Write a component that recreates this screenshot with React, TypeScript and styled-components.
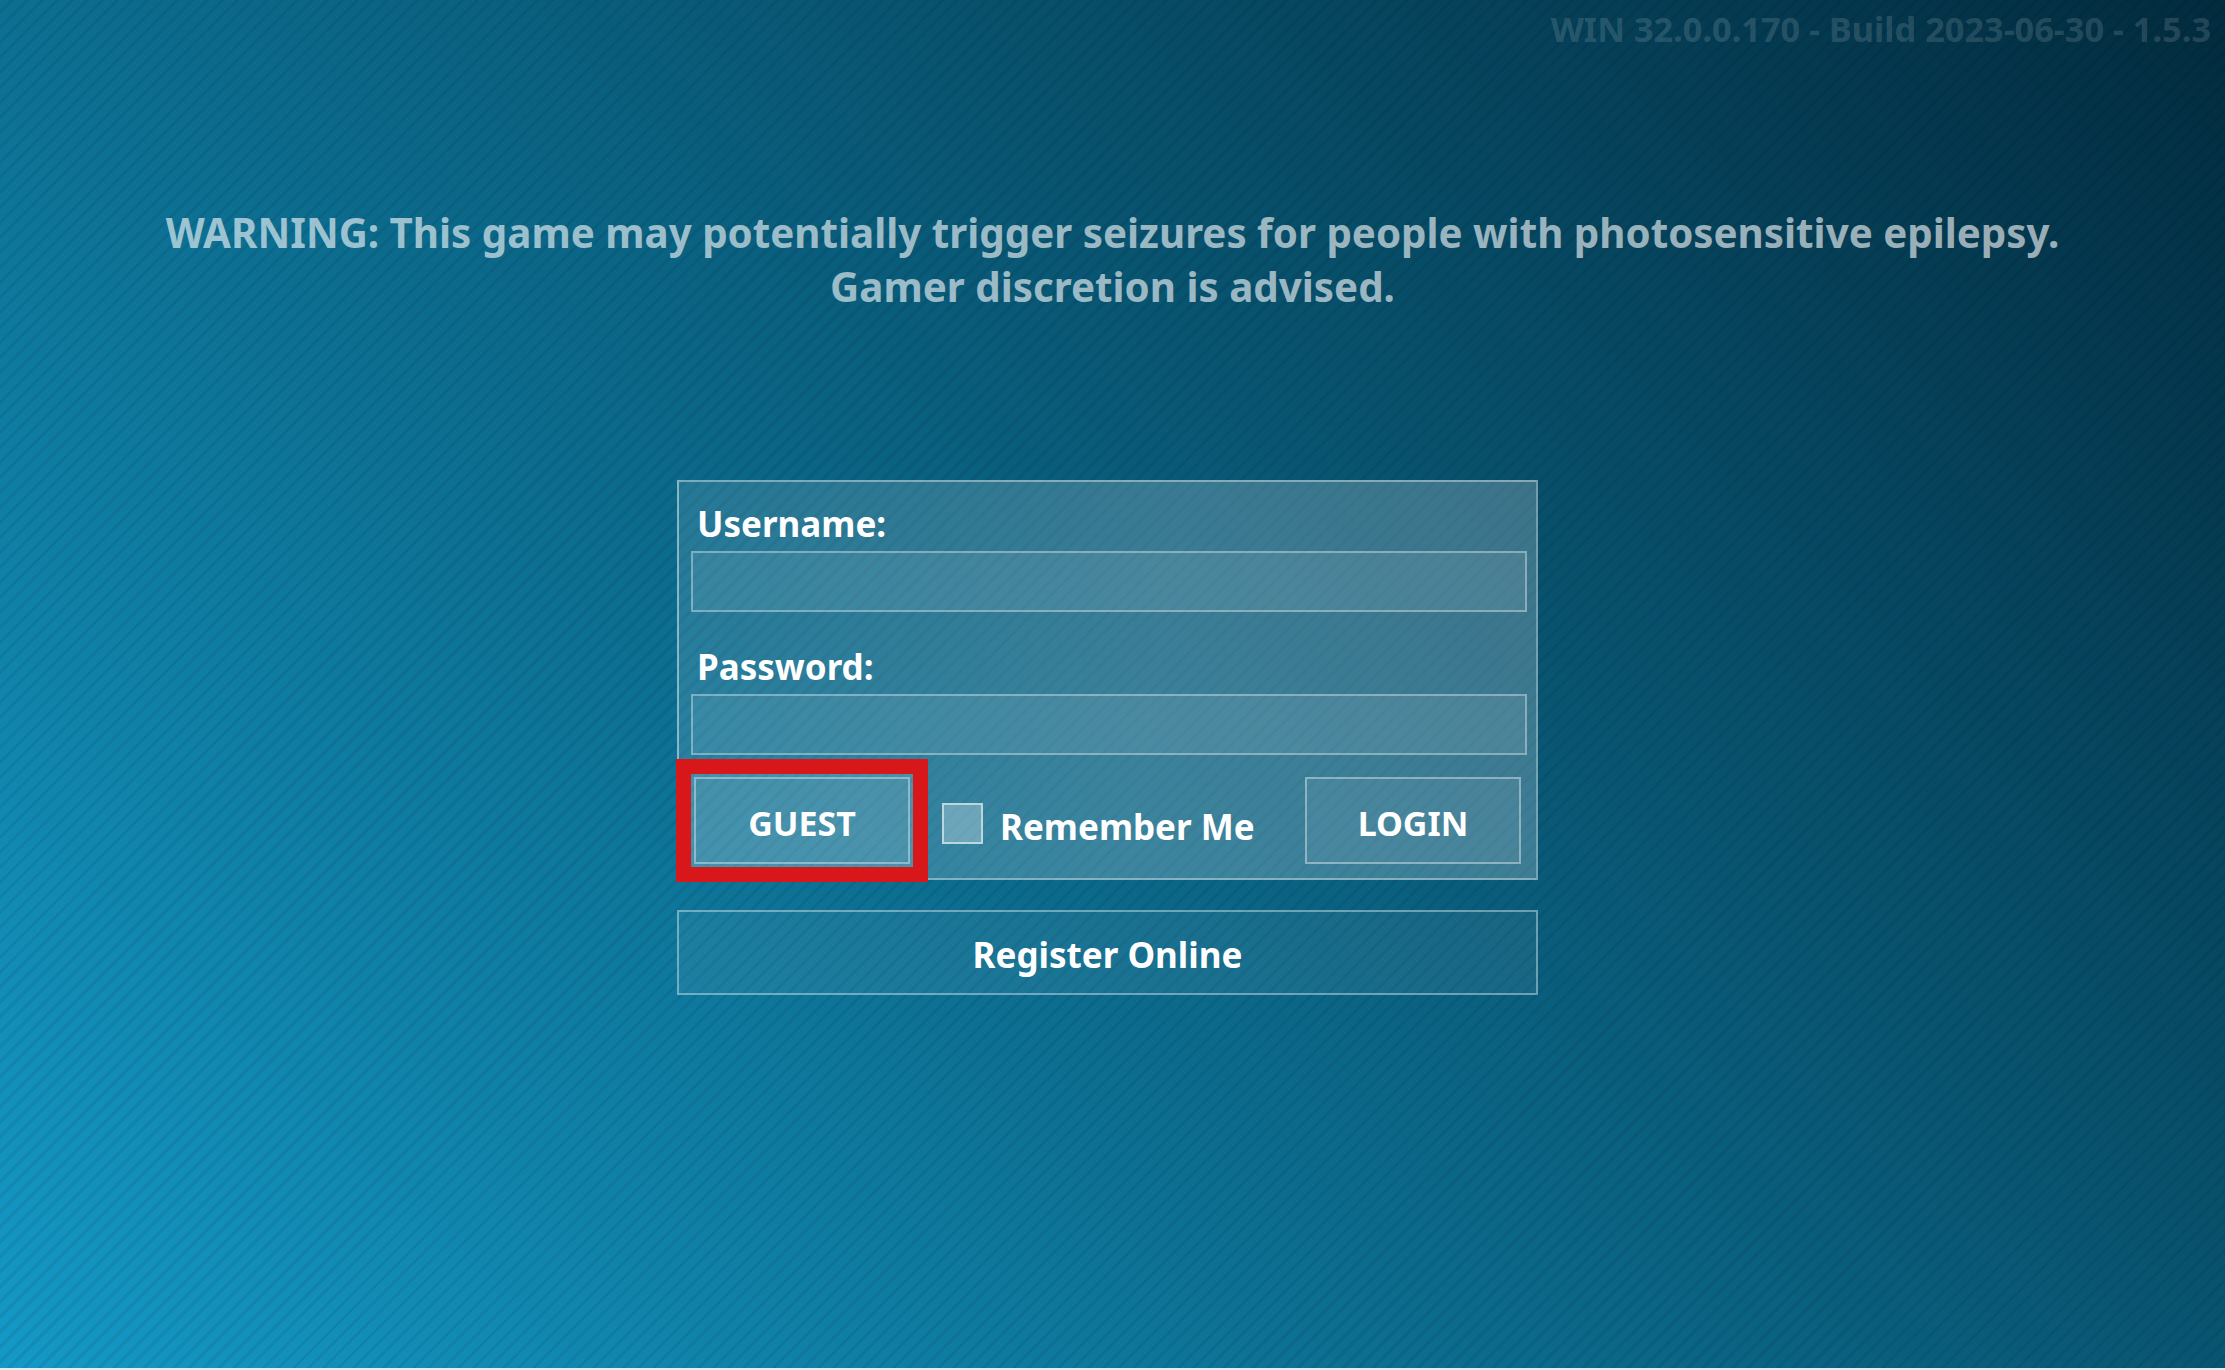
import { FC } from 'react';
import styled, { createGlobalStyle } from 'styled-components';

const GlobalStyle = createGlobalStyle`
    html, body {
        margin: 0;
        padding: 0;
        background: #e4edf1;
    }
    body {
        font-family: "Noto Sans", "Open Sans", "Liberation Sans", sans-serif;
    }
    * {
        box-sizing: border-box;
    }
`;

const Screen = styled.div`
    width: 100%;
    height: 1368px;
    display: flex;
    flex-direction: column;
    align-items: center;
    overflow: hidden;
    background-color: #0a6282;
    background-image: repeating-linear-gradient(
            135deg,
            rgba(0, 0, 0, 0) 0px,
            rgba(0, 0, 0, 0) 7.5px,
            rgba(0, 0, 0, 0.07) 7.5px,
            rgba(0, 0, 0, 0.07) 10.6px
        ),
        linear-gradient(45deg, #1499c6 0%, #0a6282 50%, #022b3e 100%);
`;

const VersionBar = styled.div`
    align-self: stretch;
    text-align: right;
    padding: 6px 14px 0 0;
    font-size: 34.3px;
    font-weight: 700;
    line-height: 46px;
    color: rgba(255, 255, 255, 0.15);
`;

const Warning = styled.p`
    margin: 154px 0 0;
    text-align: center;
    font-size: 40.3px;
    font-weight: 700;
    line-height: 54px;
    color: rgba(255, 255, 255, 0.6);
`;

const LoginForm = styled.div`
    width: 861px;
    margin: 166px 10px 0 0;
    display: flex;
    flex-direction: column;
`;

const Panel = styled.div`
    border: 2px solid rgba(255, 255, 255, 0.38);
    padding: 18px 9px 11px 12px;
    background: linear-gradient(
        100deg,
        rgba(255, 255, 255, 0.1) 0%,
        rgba(255, 255, 255, 0.2) 55%,
        rgba(255, 255, 255, 0.21) 100%
    );
`;

const FieldLabel = styled.label`
    display: block;
    padding-left: 6px;
    margin-bottom: 3px;
    font-size: 35px;
    font-weight: 700;
    line-height: 48px;
    color: #ffffff;
`;

const TextField = styled.input<{ spaced?: boolean }>`
    display: block;
    width: 100%;
    height: 61px;
    margin: 0 0 ${(p) => (p.spaced ? '31px' : '0')};
    border: 2px solid rgba(255, 255, 255, 0.35);
    background: rgba(255, 255, 255, 0.08);
    outline: none;
    color: #ffffff;
    font-size: 30px;
    font-family: inherit;
`;

const ButtonRow = styled.div`
    display: flex;
    align-items: flex-start;
    margin-top: 19px;
`;

// the red frame is a highlight drawn over the focused guest button
const GuestFocus = styled.div`
    padding: 3px;
    background: rgba(255, 255, 255, 0.12);
    outline: 15px solid #d8171b;
`;

const FormButton = styled.button<{ tint?: number }>`
    width: 216px;
    height: 87px;
    padding: 4px 0 0;
    border: 2px solid rgba(255, 255, 255, 0.38);
    background: rgba(255, 255, 255, ${(p) => p.tint ?? 0});
    color: #ffffff;
    font-family: inherit;
    font-size: 34px;
    font-weight: 700;
    cursor: pointer;
`;

const LoginButton = styled(FormButton)`
    margin: 3px 6px 0 auto;
`;

const Remember = styled.label`
    display: flex;
    align-items: flex-start;
    margin: 29px 0 0 29px;
    cursor: pointer;
`;

const CheckBox = styled.span`
    width: 41px;
    height: 41px;
    border: 2px solid rgba(255, 255, 255, 0.55);
    background: rgba(255, 255, 255, 0.28);
`;

const RememberText = styled.span`
    margin-left: 17px;
    font-size: 35px;
    font-weight: 700;
    line-height: 48px;
    color: #ffffff;
`;

const RegisterButton = styled.button`
    margin-top: 30px;
    height: 85px;
    padding: 3px 0 0;
    border: 2px solid rgba(255, 255, 255, 0.38);
    background: rgba(255, 255, 255, 0.06);
    color: #ffffff;
    font-family: inherit;
    font-size: 35px;
    font-weight: 700;
    cursor: pointer;
`;

const LoginScreen: FC = () => (
    <Screen>
        <VersionBar>WIN 32.0.0.170 - Build 2023-06-30 - 1.5.3</VersionBar>
        <Warning>
            WARNING: This game may potentially trigger seizures for people with photosensitive epilepsy.
            <br />
            Gamer discretion is advised.
        </Warning>
        <LoginForm>
            <Panel>
                <FieldLabel htmlFor="username">Username:</FieldLabel>
                <TextField id="username" type="text" spaced />
                <FieldLabel htmlFor="password">Password:</FieldLabel>
                <TextField id="password" type="password" />
                <ButtonRow>
                    <GuestFocus>
                        <FormButton>GUEST</FormButton>
                    </GuestFocus>
                    <Remember>
                        <CheckBox />
                        <RememberText>Remember Me</RememberText>
                    </Remember>
                    <LoginButton tint={0.06}>LOGIN</LoginButton>
                </ButtonRow>
            </Panel>
            <RegisterButton>Register Online</RegisterButton>
        </LoginForm>
    </Screen>
);

export default function App() {
    return (
        <>
            <GlobalStyle />
            <LoginScreen />
        </>
    );
}
